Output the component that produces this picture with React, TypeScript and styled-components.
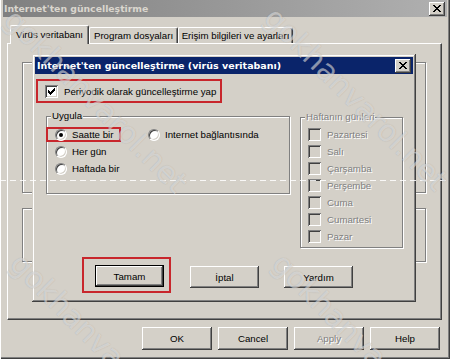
import React from "react";
import styled, { createGlobalStyle } from "styled-components";

const FACE = "#d4d0c8";
const RED = "#c8262c";

const GlobalStyle = createGlobalStyle`
  html, body {
    margin: 0;
    padding: 0;
  }
  body {
    width: 450px;
    height: 359px;
    overflow: hidden;
    background: ${FACE};
    font-family: "Liberation Sans", Arial, sans-serif;
    font-size: 9.7px;
    color: #000;
  }
  * {
    box-sizing: border-box;
  }
`;

const XGlyph = () => (
  <svg width="8" height="7" viewBox="0 0 8 7" shapeRendering="crispEdges">
    <path
      fill="#000"
      d="M0 0h2v1H0zM6 0h2v1H6zM1 1h2v1H1zM5 1h2v1H5zM2 2h4v1H2zM3 3h2v1H3zM2 4h4v1H2zM1 5h2v1H1zM5 5h2v1H5zM0 6h2v1H0zM6 6h2v1H6z"
    />
  </svg>
);

const CheckGlyph = () => (
  <svg width="7" height="7" viewBox="0 0 7 7" shapeRendering="crispEdges">
    <path
      fill="#000"
      d="M6 0h1v1H6zM5 1h2v1H5zM0 2h1v1H0zM4 2h3v1H4zM0 3h2v1H0zM3 3h3v1H3zM0 4h5v1H0zM1 5h3v1H1zM2 6h1v1H2z"
    />
  </svg>
);

const DAYS = ["Pazartesi", "Salı", "Çarşamba", "Perşembe", "Cuma", "Cumartesi", "Pazar"];

const App = () => {
  return (
    <>
      <GlobalStyle />
      <Window>
        <TitleBar>
          <span>Internet'ten güncelleştirme</span>
          <CloseButton>
            <XGlyph />
          </CloseButton>
        </TitleBar>

        <Body>
          <TabRow>
            <Tab $selected $w={79}>Virüs veritabanı</Tab>
            <Tab $w={89}>Program dosyaları</Tab>
            <Tab $w={115}>Erişim bilgileri ve ayarları</Tab>
          </TabRow>

          <Panel>
            {/* page content behind the modal dialog */}
            <GroupBox $h={131} $mb={15} />
            <GroupBox $h={54} />

            <Dialog>
              <TitleBar $active>
                <span>Internet'ten güncelleştirme (virüs veritabanı)</span>
                <CloseButton>
                  <XGlyph />
                </CloseButton>
              </TitleBar>

              <DialogBody>
                <Highlight $w={186} $h={24} $pad="0 0 0 7px" $mt={5} $ml={1}>
                  <Option>
                    <CheckBox>
                      <CheckGlyph />
                    </CheckBox>
                    Periyodik olarak güncelleştirme yap
                  </Option>
                </Highlight>

                <Groups>
                  <Frame $w={244} $h={78}>
                    <Legend>Uygula</Legend>
                    <Radios>
                      <RadioRow>
                        <Highlight $w={75} $h={15} $pad="0 0 0 7px" $ml={-1}>
                          <Option>
                            <Radio $checked />
                            Saatte bir
                          </Option>
                        </Highlight>
                        <Option $ml={27}>
                          <Radio />
                          Internet bağlantısında
                        </Option>
                      </RadioRow>
                      <RadioRow $pl={8}>
                        <Option>
                          <Radio />
                          Her gün
                        </Option>
                      </RadioRow>
                      <RadioRow $pl={8}>
                        <Option>
                          <Radio />
                          Haftada bir
                        </Option>
                      </RadioRow>
                    </Radios>
                  </Frame>

                  <Frame $w={103} $h={131} $ml={10} $mt={1}>
                    <Legend $disabled>Haftanın günleri</Legend>
                    <DayList>
                      {DAYS.map((d) => (
                        <Option key={d} $disabled>
                          <CheckBox $disabled />
                          {d}
                        </Option>
                      ))}
                    </DayList>
                  </Frame>
                </Groups>

                <DialogButtons>
                  <Highlight $w={89} $h={36} $pad="5px 5px 3px 11px" $ml={47}>
                    <Button $default $w={69} $h={22}>
                      Tamam
                    </Button>
                  </Highlight>
                  <Button $w={69} $h={22} $ml={19} $mt={9}>
                    İptal
                  </Button>
                  <Button $w={69} $h={22} $ml={25} $mt={9}>
                    Yardım
                  </Button>
                </DialogButtons>
              </DialogBody>
            </Dialog>
          </Panel>

          <ButtonBar>
            <Button $w={70} $h={23}>OK</Button>
            <Button $w={70} $h={23}>Cancel</Button>
            <Button $w={70} $h={23} disabled>
              Apply
            </Button>
            <Button $w={70} $h={23}>Help</Button>
          </ButtonBar>
        </Body>

        <DashLine />
        <Watermark $x={22} $y={2}>gokhanvarol.net</Watermark>
        <Watermark $x={282} $y={0}>gokhanvarol.net</Watermark>
        <Watermark $x={28} $y={246}>gokhanvarol.net</Watermark>
        <Watermark $x={290} $y={246}>gokhanvarol.net</Watermark>
      </Window>
    </>
  );
};

export default App;

const Window = styled.div`
  position: relative;
  width: 450px;
  height: 359px;
  overflow: hidden;
  background: ${FACE};
  padding: 0 3px;
  display: flex;
  flex-direction: column;
  box-shadow: inset 1px 0 #fff, inset -1px -1px #404040, inset -2px -2px #808080;
`;

const TitleBar = styled.div<{ $active?: boolean }>`
  height: 17px;
  flex-shrink: 0;
  display: flex;
  align-items: center;
  justify-content: space-between;
  padding: 0 2px 0 ${(p) => (p.$active ? 2 : 1)}px;
  background: ${(p) =>
    p.$active ? "#0a246a" : "linear-gradient(to right, #808080, #b0b0b0)"};
  color: ${(p) => (p.$active ? "#fff" : "#dad6ce")};
  font-family: "DejaVu Sans", Verdana, sans-serif;
  font-weight: bold;
  font-size: ${(p) => (p.$active ? 9.5 : 9.3)}px;
  white-space: nowrap;
`;

const CloseButton = styled.div`
  width: 16px;
  height: 14px;
  background: ${FACE};
  display: flex;
  align-items: center;
  justify-content: center;
  box-shadow: inset -1px -1px #404040, inset 1px 1px #fff, inset -2px -2px #808080;
`;

const Body = styled.div`
  padding: 8px 5px 0 4px;
  display: flex;
  flex-direction: column;
`;

const TabRow = styled.div`
  position: relative;
  z-index: 1;
  height: 18px;
  display: flex;
  align-items: flex-end;
  padding-left: 3px;
`;

const Tab = styled.div<{ $selected?: boolean; $w: number }>`
  width: ${(p) => p.$w}px;
  height: ${(p) => (p.$selected ? 19 : 16)}px;
  margin-bottom: ${(p) => (p.$selected ? -1 : 0)}px;
  padding-bottom: ${(p) => (p.$selected ? 1 : 0)}px;
  background: ${FACE};
  border-top: 1px solid #fff;
  border-left: 1px solid #fff;
  border-right: 1px solid #404040;
  border-radius: 2px 2px 0 0;
  box-shadow: inset -1px 0 #808080;
  display: flex;
  align-items: center;
  justify-content: center;
  white-space: nowrap;
`;

const Panel = styled.div`
  position: relative;
  height: 277px;
  border-top: 1px solid #fff;
  border-left: 1px solid #fff;
  border-right: 1px solid #404040;
  border-bottom: 1px solid #404040;
  box-shadow: inset -1px -1px #808080;
  padding: 18px 15px 0 14px;
`;

const GroupBox = styled.div<{ $h: number; $mb?: number }>`
  height: ${(p) => p.$h}px;
  margin-bottom: ${(p) => p.$mb ?? 0}px;
  border: 1px solid #808080;
  box-shadow: inset 1px 1px #fff, 1px 1px #fff;
`;

const Legend = styled.span<{ $disabled?: boolean }>`
  position: absolute;
  top: -7px;
  left: 4px;
  padding: 0 1px;
  line-height: 12px;
  background: ${FACE};
  white-space: nowrap;
  color: ${(p) => (p.$disabled ? "#808080" : "#000")};
  text-shadow: ${(p) => (p.$disabled ? "1px 1px #fff" : "none")};
`;

const Dialog = styled.div`
  position: absolute;
  left: 24px;
  top: 10px;
  z-index: 2;
  width: 384px;
  height: 248px;
  padding: 3px;
  background: ${FACE};
  display: flex;
  flex-direction: column;
  box-shadow: inset -1px -1px #404040, inset 1px 1px ${FACE}, inset -2px -2px #808080,
    inset 2px 2px #fff;
`;

const DialogBody = styled.div`
  display: flex;
  flex-direction: column;
`;

const Highlight = styled.div<{
  $w: number;
  $h: number;
  $pad: string;
  $ml?: number;
  $mt?: number;
}>`
  width: ${(p) => p.$w}px;
  height: ${(p) => p.$h}px;
  margin: ${(p) => p.$mt ?? 0}px 0 0 ${(p) => p.$ml ?? 0}px;
  padding: ${(p) => p.$pad};
  border: 2px solid ${RED};
  display: flex;
  align-items: center;
  flex-shrink: 0;
`;

const Option = styled.label<{ $ml?: number; $disabled?: boolean }>`
  display: flex;
  align-items: center;
  gap: 5px;
  height: 15px;
  white-space: nowrap;
  margin-left: ${(p) => p.$ml ?? 0}px;
  color: ${(p) => (p.$disabled ? "#808080" : "#000")};
  text-shadow: ${(p) => (p.$disabled ? "1px 1px #fff" : "none")};
`;

const CheckBox = styled.span<{ $disabled?: boolean }>`
  width: 13px;
  height: 13px;
  flex-shrink: 0;
  margin-right: 1px;
  background: ${(p) => (p.$disabled ? FACE : "#fff")};
  display: flex;
  align-items: center;
  justify-content: center;
  box-shadow: inset 1px 1px #808080, inset -1px -1px #fff, inset 2px 2px #404040,
    inset -2px -2px ${FACE};
`;

const Radio = styled.span<{ $checked?: boolean }>`
  position: relative;
  width: 12px;
  height: 12px;
  flex-shrink: 0;
  border-radius: 50%;
  background: #fff;
  border: 1px solid;
  border-color: #808080 #fff #fff #808080;
  box-shadow: inset 1px 1px #404040, inset -1px -1px ${FACE};

  &::after {
    content: "";
    display: ${(p) => (p.$checked ? "block" : "none")};
    position: absolute;
    left: 3px;
    top: 3px;
    width: 4px;
    height: 4px;
    border-radius: 50%;
    background: #000;
  }
`;

const Groups = styled.div`
  display: flex;
  align-items: flex-start;
  margin: 13px 0 0 11px;
`;

const Frame = styled.div<{ $w: number; $h: number; $ml?: number; $mt?: number }>`
  position: relative;
  width: ${(p) => p.$w}px;
  height: ${(p) => p.$h}px;
  margin: ${(p) => p.$mt ?? 0}px 0 0 ${(p) => p.$ml ?? 0}px;
  border: 1px solid #808080;
  box-shadow: inset 1px 1px #fff, 1px 1px #fff;
`;

const Radios = styled.div`
  display: flex;
  flex-direction: column;
  gap: 2px;
  padding-top: 10px;
`;

const RadioRow = styled.div<{ $pl?: number }>`
  display: flex;
  align-items: center;
  padding-left: ${(p) => p.$pl ?? 0}px;
`;

const DayList = styled.div`
  display: flex;
  flex-direction: column;
  gap: 2px;
  padding: 9px 0 0 7px;
`;

const DialogButtons = styled.div`
  display: flex;
  align-items: flex-start;
  margin-top: 9px;
`;

const Button = styled.button<{
  $default?: boolean;
  $w: number;
  $h: number;
  $ml?: number;
  $mt?: number;
}>`
  width: ${(p) => p.$w}px;
  height: ${(p) => p.$h}px;
  margin: ${(p) => p.$mt ?? 0}px 0 0 ${(p) => p.$ml ?? 0}px;
  padding: 0;
  font: inherit;
  color: #000;
  background: ${FACE};
  border: ${(p) => (p.$default ? "1px solid #000" : "none")};
  box-shadow: inset -1px -1px #404040, inset 1px 1px #fff, inset -2px -2px #808080;
  flex-shrink: 0;

  &:disabled {
    color: #808080;
    text-shadow: 1px 1px #fff;
  }
`;

const ButtonBar = styled.div`
  display: flex;
  justify-content: flex-end;
  gap: 6px;
  margin-top: 7px;
  padding-right: 2px;
`;

const DashLine = styled.div`
  position: absolute;
  left: 0;
  right: 0;
  top: 180px;
  height: 1px;
  z-index: 5;
  background: repeating-linear-gradient(to right, #fff 0 6px, transparent 6px 10px);
  opacity: 0.85;
  pointer-events: none;
`;

const Watermark = styled.div<{ $x: number; $y: number }>`
  position: absolute;
  left: ${(p) => p.$x}px;
  top: ${(p) => p.$y}px;
  z-index: 5;
  transform: rotate(45deg);
  transform-origin: 0 0;
  font-family: "DejaVu Sans", sans-serif;
  font-size: 30px;
  white-space: nowrap;
  color: rgba(255, 255, 255, 0.48);
  text-shadow: 0 0 1px rgba(90, 90, 90, 0.35);
  pointer-events: none;
`;
